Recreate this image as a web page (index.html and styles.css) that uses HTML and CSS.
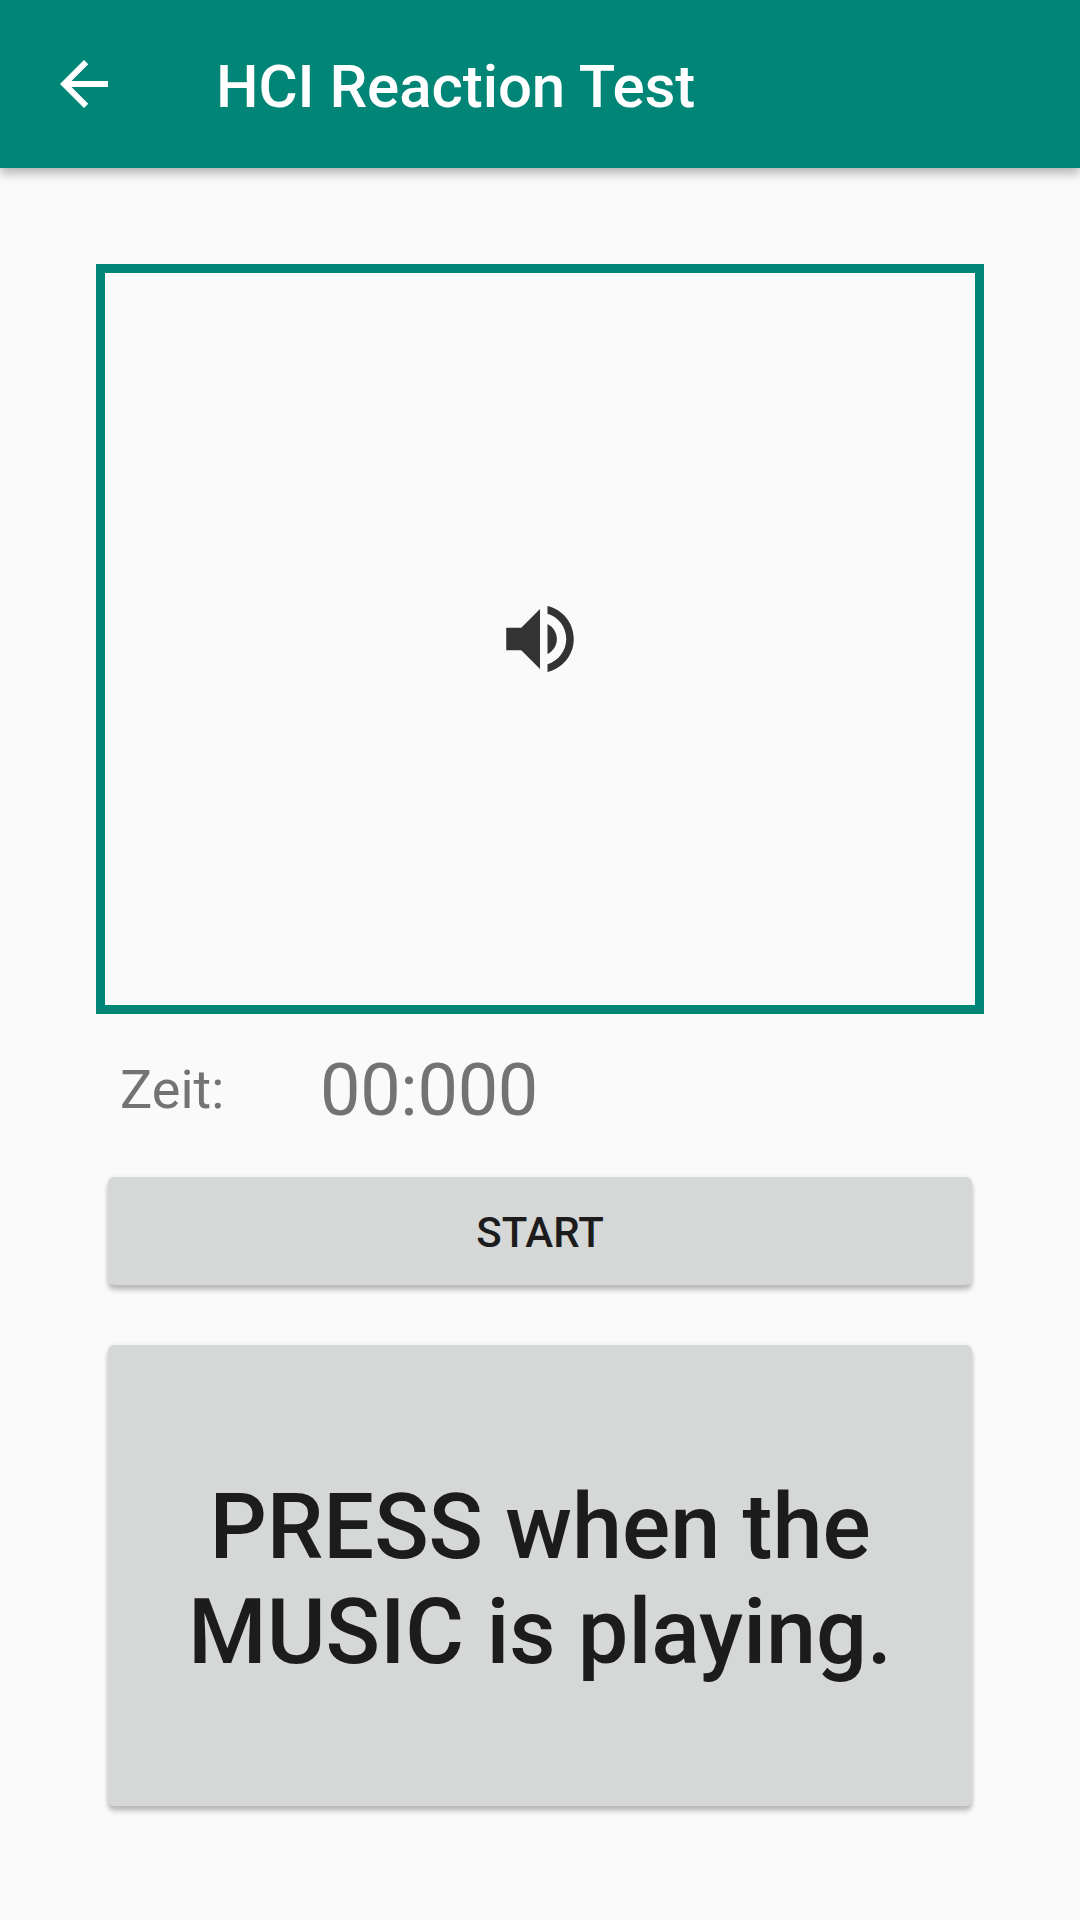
FILE: index.html
```html
<!DOCTYPE html>
<html lang="de">
<head>
<meta charset="utf-8">
<title>HCI Reaction Test</title>
<link rel="stylesheet" href="styles.css">
</head>
<body>
<header class="app-bar">
  <svg class="back-icon" viewBox="0 0 24 24" role="img" aria-label="Back"><path d="M20 11H7.83l5.59-5.59L12 4l-8 8 8 8 1.41-1.41L7.83 13H20z"/></svg>
  <h1 class="title">HCI Reaction Test</h1>
</header>
<main class="content">
  <section class="stage">
    <svg class="volume-icon" viewBox="0 0 24 24" aria-hidden="true"><path d="M3 9v6h4l5 5V4L7 9H3zm13.5 3c0-1.77-1.02-3.29-2.5-4.03v8.05c1.48-.73 2.5-2.25 2.5-4.02zM14 3.23v2.06c2.89.86 5 3.54 5 6.71s-2.11 5.85-5 6.71v2.06c4.01-.91 7-4.49 7-8.77s-2.99-7.86-7-8.77z"/></svg>
  </section>
  <div class="timer">
    <span class="timer-label">Zeit:</span>
    <span class="timer-value">00:000</span>
  </div>
  <button class="button start" type="button">START</button>
  <button class="button press" type="button">PRESS when the<br>MUSIC is playing.</button>
</main>
</body>
</html>
```
FILE: styles.css
```css
* {
  box-sizing: border-box;
}

body {
  margin: 0;
  min-height: 1920px;
  background: #fafafa;
  font-family: Roboto, sans-serif;
  overflow: hidden;
}

.app-bar {
  display: flex;
  align-items: center;
  gap: 96px;
  height: 168px;
  padding: 0 48px;
  background: #008577;
  color: #fff;
  box-shadow: 0 5px 10px rgba(0, 0, 0, 0.3);
}

.back-icon {
  width: 72px;
  height: 72px;
  fill: currentColor;
}

.title {
  margin: 0;
  padding-top: 6px;
  font-size: 60px;
  font-weight: 500;
  line-height: 70px;
  letter-spacing: -0.06px;
}

.content {
  display: flex;
  flex-direction: column;
  padding: 96px 96px 0;
}

.stage {
  display: flex;
  align-items: center;
  justify-content: center;
  height: 750px;
  border: 9px solid #008577;
}

.volume-icon {
  width: 90px;
  height: 90px;
  fill: #333;
}

.timer {
  display: flex;
  align-items: center;
  height: 151px;
  padding-left: 24px;
  color: #737373;
}

.timer-label {
  width: 200px;
  font-size: 54px;
}

.timer-value {
  padding-top: 2px;
  font-size: 72px;
  letter-spacing: -0.3px;
}

.button {
  margin: 12px 12px 0;
  padding: 0;
  border: 0;
  border-radius: 6px;
  background: #d6d8d7;
  color: #1c1c1c;
  font-family: inherit;
  font-weight: 500;
  text-align: center;
  box-shadow: 0 5px 5px rgba(0, 0, 0, 0.24), 0 0 5px rgba(0, 0, 0, 0.08);
}

.start {
  height: 108px;
  padding-top: 2px;
  font-size: 42px;
}

.press {
  height: 461px;
  margin-top: 60px;
  padding-top: 8px;
  font-size: 90px;
  line-height: 105px;
  letter-spacing: -0.05px;
}
```
